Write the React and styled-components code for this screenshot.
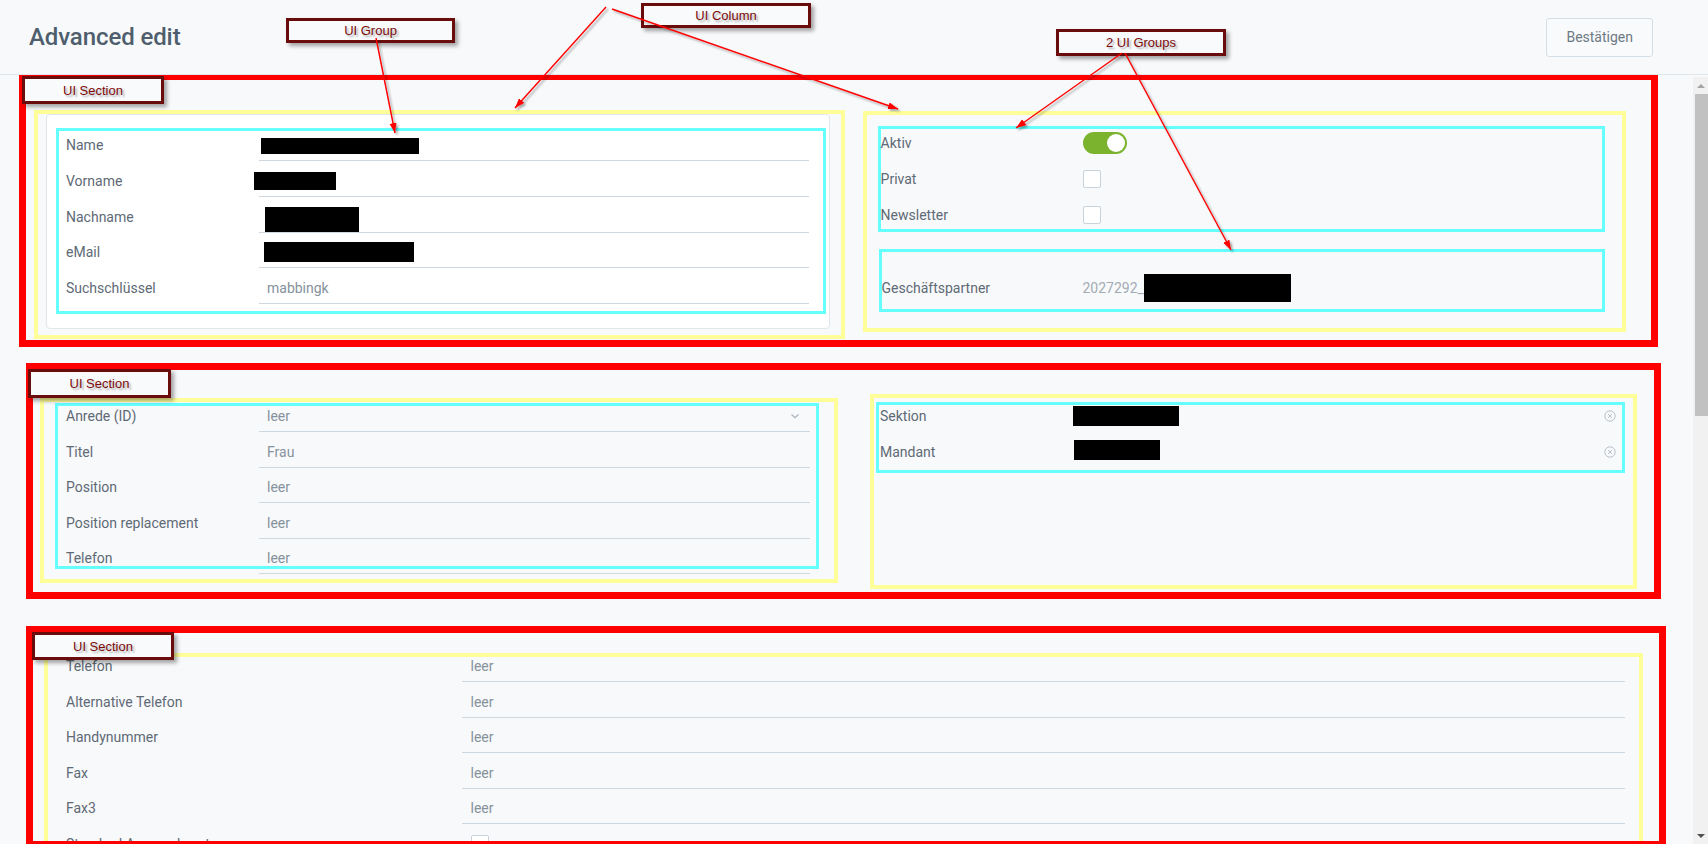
import React from 'react';
import styled, { createGlobalStyle } from 'styled-components';

const Global = createGlobalStyle`
  html, body { margin: 0; padding: 0; background: #f8f9fb; }
  body { font-family: Roboto, "Noto Sans", "Liberation Sans", sans-serif; }
  *, *::before, *::after { box-sizing: border-box; }
`;

const Page = styled.div`
  position: relative;
  width: 1708px;
  height: 844px;
  overflow: hidden;
  background: #f8f9fb;
  display: flex;
  flex-direction: column;
`;

const Header = styled.header`
  flex: 0 0 75px;
  display: flex;
  align-items: center;
  justify-content: space-between;
  padding: 0 55px 0 29px;
  border-bottom: 1px solid #dfe6ec;
`;

const Title = styled.h1`
  margin: 0;
  font-size: 24px;
  font-weight: 500;
  color: #4f5e6c;
  letter-spacing: -0.1px;
`;

const ConfirmButton = styled.button`
  height: 39px;
  padding: 0 19px;
  border: 1px solid #d6dee5;
  border-radius: 3px;
  background: #f9fafb;
  color: #6c7985;
  font-family: Roboto, sans-serif;
  font-size: 14px;
`;

const Main = styled.div`
  flex: 1;
  min-height: 0;
  display: flex;
`;

const Content = styled.main`
  flex: 1;
  min-width: 0;
  overflow: hidden;
  display: flex;
  flex-direction: column;
  align-items: flex-start;
`;

const Scrollbar = styled.div`
  flex: 0 0 15px;
  margin-top: 2px;
  background: #f1f1f1;
  display: flex;
  flex-direction: column;
`;

const ScrollArrow = styled.div`
  flex: 0 0 17px;
  display: flex;
  align-items: center;
  justify-content: center;
  &::before {
    content: '';
    border-left: 4px solid transparent;
    border-right: 4px solid transparent;
    ${p => (p.$down
      ? 'border-top: 4px solid #505050;'
      : 'border-bottom: 4px solid #a3a3a3;')}
  }
`;

const ScrollThumb = styled.div`
  flex: 0 0 322px;
  margin-left: 2px;
  background: #c1c1c1;
`;

const ScrollTrack = styled.div`
  flex: 1;
`;

/* ---------- Annotated structure ---------- */

const Section = styled.section`
  flex: none;
  width: ${p => p.$w}px;
  height: ${p => p.$h}px;
  margin: ${p => p.$mt}px 0 0 ${p => p.$ml}px;
  padding: ${p => p.$pt}px 0 0 ${p => p.$pl}px;
  border: 7px solid #ff0000;
  overflow: hidden;
  display: flex;
  align-items: flex-start;
  gap: ${p => p.$gap || 0}px;
`;

const Column = styled.div`
  flex: none;
  width: ${p => p.$w}px;
  height: ${p => p.$h}px;
  margin-top: ${p => p.$mt || 0}px;
  padding: ${p => p.$pad || '0'};
  border: 4px solid #ffff99;
  display: flex;
  flex-direction: column;
  align-items: flex-start;
`;

const Card = styled.div`
  flex: none;
  width: ${p => p.$w}px;
  height: ${p => p.$h}px;
  background: #ffffff;
  border: 1px solid #e1e6eb;
  border-radius: 4px;
  display: flex;
  flex-direction: column;
  align-items: flex-start;
`;

const Group = styled.div`
  flex: none;
  width: ${p => p.$w}px;
  height: ${p => p.$h}px;
  margin: ${p => p.$mt || 0}px 0 0 ${p => p.$ml || 0}px;
  border: 3px solid #66ffff;
  display: flex;
  flex-direction: column;
  justify-content: ${p => (p.$end ? 'flex-end' : 'flex-start')};
`;

const RowList = styled.div`
  align-self: stretch;
  margin-top: ${p => p.$shift || 0}px;
  padding: 0 ${p => p.$pr || 0}px 0 ${p => p.$pl || 0}px;
  display: flex;
  flex-direction: column;
`;

const Row = styled.div`
  flex: none;
  height: ${p => p.$h}px;
  display: grid;
  grid-template-columns: ${p => p.$label}px 1fr;
`;

const Label = styled.div`
  display: flex;
  align-items: center;
  padding-top: ${p => (p.$plain ? 0 : p.$h - 31)}px;
  border-bottom: ${p => (p.$plain ? 0 : 1)}px solid transparent;
  font-size: 14px;
  color: #5e6a75;
  white-space: nowrap;
`;

const Value = styled.div`
  display: flex;
  align-items: center;
  min-width: 0;
  padding: ${p => (p.$plain ? 0 : p.$h - 31)}px ${p => p.$pr || 0}px 0 ${p => p.$pl || 0}px;
  border-bottom: ${p => (p.$plain ? '0' : '1px solid #cfd8df')};
  font-size: 14px;
  color: ${p => (p.$muted ? '#a3acb4' : '#86929c')};
  white-space: nowrap;
`;

const Redact = styled.span`
  flex: none;
  display: inline-block;
  width: ${p => p.$w}px;
  height: ${p => p.$h}px;
  margin-left: ${p => p.$dx || 0}px;
  margin-top: ${p => 2 * (p.$dy || 0)}px;
  background: #000000;
`;

const Toggle = styled.span`
  flex: none;
  position: relative;
  width: 44px;
  height: 22px;
  border-radius: 11px;
  background: #7bb32e;
  &::after {
    content: '';
    position: absolute;
    top: 2px;
    right: 2px;
    width: 18px;
    height: 18px;
    border-radius: 50%;
    background: #ffffff;
  }
`;

const Checkbox = styled.span`
  flex: none;
  width: 18px;
  height: 18px;
  border: 1px solid #c9d3db;
  border-radius: 2px;
  background: #ffffff;
`;

const TrailingIcon = styled.svg`
  flex: none;
  margin-left: auto;
`;

/* ---------- Annotation overlay ---------- */

const Overlay = styled.div`
  position: absolute;
  inset: 0;
  pointer-events: none;
`;

const Tag = styled.div`
  position: absolute;
  left: ${p => p.$x}px;
  top: ${p => p.$y}px;
  width: ${p => p.$w}px;
  height: ${p => p.$h}px;
  border: 3px solid #6b0c0c;
  background: #f9fafb;
  box-shadow: 3px 3px 4px rgba(0, 0, 0, 0.35);
  display: flex;
  align-items: center;
  justify-content: center;
  font-family: "Liberation Sans", Arial, sans-serif;
  font-size: 13px;
  color: #7d0b0b;
  text-shadow: 2px 2px 2px rgba(0, 0, 0, 0.3);
`;

const ArrowLayer = styled.svg`
  position: absolute;
  left: 0;
  top: 0;
`;

const Chevron = () => (
  <TrailingIcon width="10" height="10" viewBox="0 0 10 10">
    <path d="M1.5 3.5 L5 6.8 L8.5 3.5" fill="none" stroke="#aab4bc" strokeWidth="1.2" />
  </TrailingIcon>
);

const ClearIcon = () => (
  <TrailingIcon width="12" height="12" viewBox="0 0 12 12">
    <circle cx="6" cy="6" r="5.2" fill="none" stroke="#b8c2ca" strokeWidth="1" />
    <path d="M4 4 L8 8 M8 4 L4 8" stroke="#b8c2ca" strokeWidth="1" />
  </TrailingIcon>
);

const personRows = [
  { label: 'Name', redact: { dx: -6, dy: 1, w: 158, h: 16 } },
  { label: 'Vorname', redact: { dx: -13, dy: 0, w: 82, h: 18 } },
  { label: 'Nachname', redact: { dx: -2, dy: 2.5, w: 94, h: 25 } },
  { label: 'eMail', redact: { dx: -3, dy: 0, w: 150, h: 20 } },
  { label: 'Suchschlüssel', text: 'mabbingk' },
];

const contactRows = [
  { label: 'Anrede (ID)', text: 'leer', select: true },
  { label: 'Titel', text: 'Frau' },
  { label: 'Position', text: 'leer' },
  { label: 'Position replacement', text: 'leer' },
  { label: 'Telefon', text: 'leer' },
];

const phoneRows = [
  { label: 'Telefon', text: 'leer' },
  { label: 'Alternative Telefon', text: 'leer' },
  { label: 'Handynummer', text: 'leer' },
  { label: 'Fax', text: 'leer' },
  { label: 'Fax3', text: 'leer' },
  { label: 'Standard Ansprechpartner', check: true },
];

const arrows = [
  [376, 38, 395, 133],
  [606, 7, 515, 108],
  [612, 9, 898, 109],
  [1122, 53, 1016, 128],
  [1125, 53, 1231, 250],
];

const tags = [
  { t: 'UI Group', x: 286, y: 18, w: 169, h: 25 },
  { t: 'UI Column', x: 641, y: 3, w: 170, h: 25 },
  { t: 'UI Section', x: 22, y: 76, w: 142, h: 28 },
  { t: '2 UI Groups', x: 1056, y: 29, w: 170, h: 27 },
  { t: 'UI Section', x: 28, y: 369, w: 143, h: 29 },
  { t: 'UI Section', x: 32, y: 632, w: 142, h: 28 },
];

function FieldRows({ rows, h, label, pl = 8 }) {
  return rows.map(r => (
    <Row key={r.label} $h={h} $label={label}>
      <Label $h={h}>{r.label}</Label>
      <Value $h={h} $pl={pl} $pr={r.select ? 10 : 0}>
        {r.text}
        {r.redact && (
          <Redact $dx={r.redact.dx} $dy={r.redact.dy} $w={r.redact.w} $h={r.redact.h} />
        )}
        {r.check && <Checkbox />}
        {r.select && <Chevron />}
      </Value>
    </Row>
  ));
}

export default function App() {
  return (
    <Page>
      <Global />
      <Header>
        <Title>Advanced edit</Title>
        <ConfirmButton type="button">Bestätigen</ConfirmButton>
      </Header>
      <Main>
        <Content>
          {/* Section 1 */}
          <Section $w={1639} $h={274} $mt={-2} $ml={19} $pt={30} $pl={8} $gap={18}>
            <Column $w={811} $h={229} $pad="0 0 0 7.5px">
              <Card $w={784} $h={215}>
                <Group $w={770} $h={186} $ml={9.5} $mt={12.5}>
                  <RowList $shift={-5} $pl={7} $pr={13.6}>
                    <FieldRows rows={personRows} h={35.7} label={193} />
                  </RowList>
                </Group>
              </Card>
            </Column>
            <Column $w={763} $h={221} $mt={0.7}>
              <Group $w={727} $h={106} $ml={10.6} $mt={11}>
                <RowList $shift={-3.5}>
                  <Row $h={36} $label={202}>
                    <Label $plain>Aktiv</Label>
                    <Value $plain><Toggle /></Value>
                  </Row>
                  <Row $h={36} $label={202}>
                    <Label $plain>Privat</Label>
                    <Value $plain><Checkbox /></Value>
                  </Row>
                  <Row $h={36} $label={202}>
                    <Label $plain>Newsletter</Label>
                    <Value $plain><Checkbox /></Value>
                  </Row>
                </RowList>
              </Group>
              <Group $w={726} $h={63} $ml={11.5} $mt={17} $end>
                <RowList>
                  <Row $h={42} $label={201}>
                    <Label $plain>Geschäftspartner</Label>
                    <Value $plain $muted>
                      2027292_
                      <Redact $w={147} $h={28} $dy={0.7} />
                    </Value>
                  </Row>
                </RowList>
              </Group>
            </Column>
          </Section>

          {/* Section 2 */}
          <Section $w={1635} $h={236} $mt={16} $ml={26} $pt={28} $pl={6.5} $gap={32.5}>
            <Column $w={798} $h={185}>
              <Group $w={764} $h={166} $ml={11.5} $mt={1}>
                <RowList $shift={-9.5} $pl={8} $pr={6}>
                  <FieldRows rows={contactRows} h={35.5} label={193} />
                </RowList>
              </Group>
            </Column>
            <Column $w={767} $h={195} $mt={-4}>
              <Group $w={749} $h={71} $ml={2} $mt={4}>
                <RowList $shift={-7} $pl={1} $pr={6}>
                  <Row $h={36} $label={193}>
                    <Label $plain>Sektion</Label>
                    <Value $plain>
                      <Redact $w={106} $h={20} />
                      <ClearIcon />
                    </Value>
                  </Row>
                  <Row $h={36} $label={193}>
                    <Label $plain>Mandant</Label>
                    <Value $plain>
                      <Redact $w={86} $h={20} $dx={1} $dy={-2} />
                      <ClearIcon />
                    </Value>
                  </Row>
                </RowList>
              </Group>
            </Column>
          </Section>

          {/* Section 3 */}
          <Section $w={1640} $h={222} $mt={27} $ml={26} $pt={20} $pl={11}>
            <Column $w={1599} $h={400}>
              <RowList $shift={-10.5} $pl={18} $pr={14}>
                <FieldRows rows={phoneRows} h={35.5} label={396} pl={8.5} />
              </RowList>
            </Column>
          </Section>
        </Content>
        <Scrollbar>
          <ScrollArrow />
          <ScrollThumb />
          <ScrollTrack />
          <ScrollArrow $down />
        </Scrollbar>
      </Main>

      <Overlay>
        {tags.map((g, i) => (
          <Tag key={i} $x={g.x} $y={g.y} $w={g.w} $h={g.h}>{g.t}</Tag>
        ))}
        <ArrowLayer width="1708" height="844" viewBox="0 0 1708 844">
          <defs>
            <marker id="head" markerUnits="userSpaceOnUse" markerWidth="11" markerHeight="8"
              refX="10" refY="3.5" orient="auto">
              <path d="M0 0 L10 3.5 L0 7 Z" fill="#ff0000" />
            </marker>
            <filter id="shade" x="-10%" y="-10%" width="120%" height="120%">
              <feDropShadow dx="2" dy="2" stdDeviation="1.2" floodColor="#000" floodOpacity="0.35" />
            </filter>
          </defs>
          <g filter="url(#shade)">
            {arrows.map(([x1, y1, x2, y2], i) => (
              <line key={i} x1={x1} y1={y1} x2={x2} y2={y2}
                stroke="#ff0000" strokeWidth="1.4" markerEnd="url(#head)" />
            ))}
          </g>
        </ArrowLayer>
      </Overlay>
    </Page>
  );
}
